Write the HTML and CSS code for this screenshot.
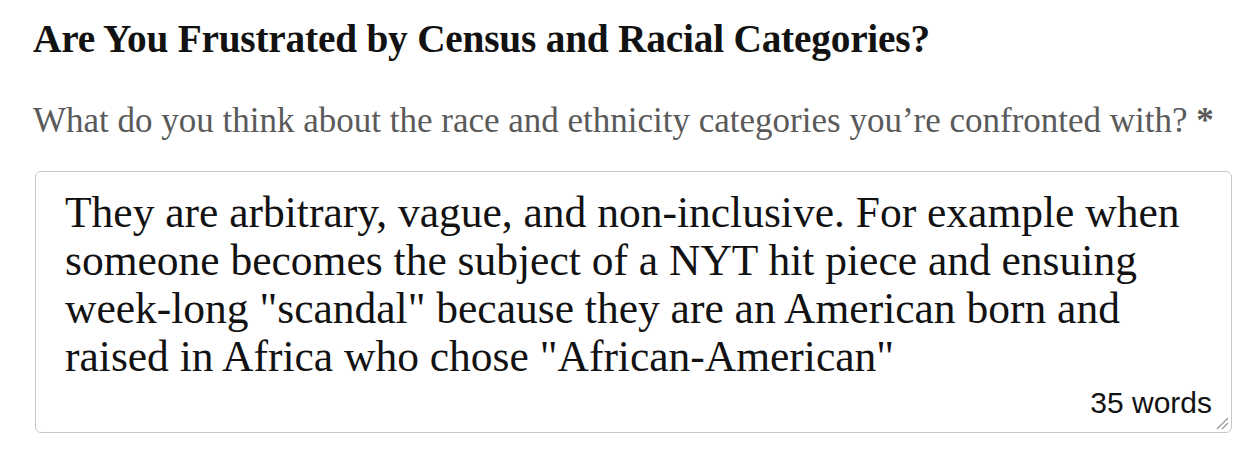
FILE: index.html
```html
<!DOCTYPE html>
<html lang="en">
<head>
    <meta charset="UTF-8">
    <title>Census Callout</title>
    <link rel="stylesheet" href="styles.css">
</head>
<body>
    <div class="callout">
        <h2 class="callout-title">Are You Frustrated by Census and Racial Categories?</h2>

        <label class="question" for="answer">What do you think about the race and ethnicity categories you’re confronted with? <span class="required">*</span></label>

        <div class="answer-box">
            <textarea id="answer" class="answer">They are arbitrary, vague, and non-inclusive. For example when someone becomes the subject of a NYT hit piece and ensuing week-long "scandal" because they are an American born and raised in Africa who chose "African-American"</textarea>
            <span class="word-count">35 words</span>
            <!-- resize grip -->
            <svg class="grip" width="14" height="14" viewBox="0 0 14 14">
                <line x1="2" y1="13" x2="13" y2="2" stroke="#999" stroke-width="1.2"/>
                <line x1="7" y1="13" x2="13" y2="7" stroke="#999" stroke-width="1.2"/>
            </svg>
        </div>
    </div>
</body>
</html>
```

FILE: styles.css
```css
body {
    margin: 0;
    padding: 0;
    background: #fff;
    font-family: 'Liberation Serif', 'Times New Roman', serif;
}

.callout {
    padding: 17px 20px 0 33px;
}

.callout-title {
    margin: 0;
    font-size: 39.3px;
    line-height: 44px;
    font-weight: bold;
    color: #121212;
    letter-spacing: -0.2px;
}

.question {
    display: block;
    margin-top: 40px;
    font-size: 35px;
    line-height: 40px;
    color: #5a5a5a;
}

.required {
    font-weight: bold;
}

.answer-box {
    position: relative;
    margin: 30px 0 0 2px;
    width: 1197px;
}

.answer {
    display: block;
    box-sizing: border-box;
    width: 100%;
    height: 262px;
    margin: 0;
    padding: 16px 20px 0 29px;
    border: 1px solid #c7c7c7;
    border-radius: 6px;
    font-family: 'Liberation Serif', 'Times New Roman', serif;
    font-size: 43.5px;
    line-height: 48px;
    color: #121212;
    background: #fff;
    resize: none;
    outline: none;
    overflow: hidden;
}

.word-count {
    position: absolute;
    right: 20px;
    bottom: 13px;
    font-family: 'Liberation Sans', Arial, sans-serif;
    font-size: 30px;
    line-height: 34px;
    color: #121212;
}

.grip {
    position: absolute;
    right: 3px;
    bottom: 3px;
}
```
